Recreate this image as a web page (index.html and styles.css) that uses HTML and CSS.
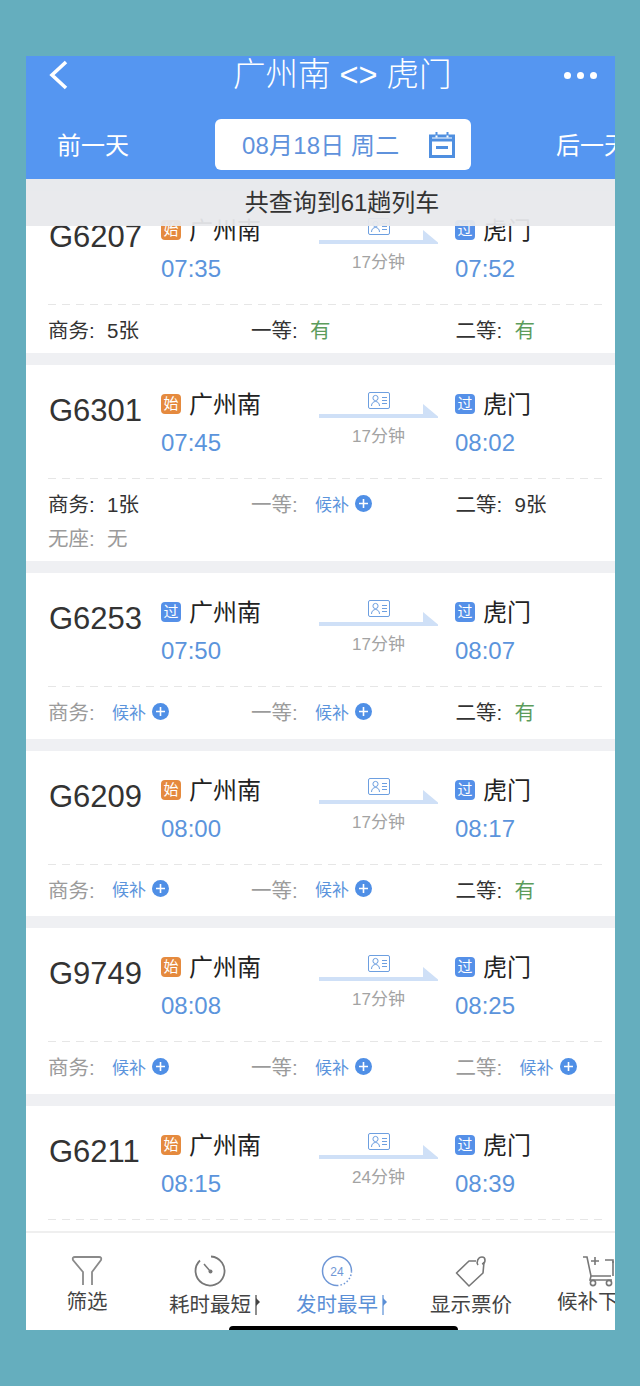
FILE: index.html
```html
<!DOCTYPE html>
<html lang="zh-CN">
<head>
    <meta charset="UTF-8">
    <meta name="viewport" content="width=device-width, initial-scale=1.0">
    <title>广州南 - 虎门</title>
    <link rel="stylesheet" href="styles.css">
</head>
<body>
    <svg class="defs" width="0" height="0">
        <symbol id="route-arrow" viewBox="0 0 120 27">
            <rect x="49.5" y="0.5" width="21" height="16" rx="1.5" fill="#fff" stroke="#6d9fe0"/>
            <circle cx="56.5" cy="6" r="2.6" fill="none" stroke="#6d9fe0"/>
            <path d="M52.5 14c0-6 8-6 8 0" fill="none" stroke="#6d9fe0"/>
            <path d="M63 5.5h5M63 8.5h5M63 11.5h5" stroke="#6d9fe0"/>
            <path d="M0 22h104V12l15 12.500V26H0z" fill="#cfe0f7"/>
        </symbol>
        <symbol id="plus" viewBox="0 0 17 17">
            <circle cx="8.5" cy="8.5" r="8.5" fill="#4f8fe6"/>
            <path d="M8.5 4v9M4 8.5h9" stroke="#fff" stroke-width="1.6"/>
        </symbol>
        <symbol id="sort-mark" viewBox="0 0 5 20">
            <path d="M1 0v20" stroke="currentColor" stroke-width="1.2"/>
            <path d="M1 3l4 4-4 4z" fill="currentColor"/>
        </symbol>
    </svg>

    <div class="screen">
        <header class="header">
            <div class="title-row">
                <svg class="back" width="20" height="30" viewBox="0 0 20 30"><path d="M18 2L4 15l14 13" fill="none" stroke="#fff" stroke-width="3.6"/></svg>
                <h1 class="title">广州南 &lt;&gt; 虎门</h1>
                <div class="dots"><span></span><span></span><span></span></div>
            </div>
            <div class="date-row">
                <span class="day-link">前一天</span>
                <div class="date-pill">
                    <span class="date-text">08月18日 周二</span>
                    <svg width="26" height="26" viewBox="0 0 26 26">
                        <path d="M1.500 4h23v20.500h-23z" fill="none" stroke="#4f8fe0" stroke-width="3"/>
                        <path d="M1 8h24" stroke="#4f8fe0" stroke-width="3"/>
                        <path d="M7.500 0v5M18.500 0v5" stroke="#4f8fe0" stroke-width="2"/>
                        <path d="M7.500 3.500v2M18.500 3.500v2" stroke="#fff" stroke-width="2"/>
                        <rect x="7" y="14" width="12" height="3" fill="#4f8fe0"/>
                    </svg>
                </div>
                <span class="day-link day-next">后一天</span>
            </div>
        </header>

        <div class="content">
            <div class="count-banner">共查询到61趟列车</div>
            <div class="list">
                <section class="card card-first">
                    <div class="route">
                        <div class="train-no">G6207</div>
                        <div class="stop">
                            <div class="stop-name"><i class="badge badge-start">始</i>广州南</div>
                            <div class="stop-time">07:35</div>
                        </div>
                        <div class="trip">
                            <svg width="120" height="27"><use href="#route-arrow"/></svg>
                            <div class="duration">17分钟</div>
                        </div>
                        <div class="stop stop-end">
                            <div class="stop-name"><i class="badge">过</i>虎门</div>
                            <div class="stop-time">07:52</div>
                        </div>
                    </div>
                    <div class="seats">
                        <div class="seat"><span class="seat-label">商务:</span><span>5张</span></div>
                        <div class="seat"><span class="seat-label">一等:</span><span class="yes">有</span></div>
                        <div class="seat"><span class="seat-label">二等:</span><span class="yes">有</span></div>
                    </div>
                </section>

                <section class="card card-tall">
                    <div class="route">
                        <div class="train-no">G6301</div>
                        <div class="stop">
                            <div class="stop-name"><i class="badge badge-start">始</i>广州南</div>
                            <div class="stop-time">07:45</div>
                        </div>
                        <div class="trip">
                            <svg width="120" height="27"><use href="#route-arrow"/></svg>
                            <div class="duration">17分钟</div>
                        </div>
                        <div class="stop stop-end">
                            <div class="stop-name"><i class="badge">过</i>虎门</div>
                            <div class="stop-time">08:02</div>
                        </div>
                    </div>
                    <div class="seats">
                        <div class="seat"><span class="seat-label">商务:</span><span>1张</span></div>
                        <div class="seat off"><span class="seat-label">一等:</span><span class="wait">候补<svg width="17" height="17"><use href="#plus"/></svg></span></div>
                        <div class="seat"><span class="seat-label">二等:</span><span>9张</span></div>
                        <div class="seat off"><span class="seat-label">无座:</span><span>无</span></div>
                    </div>
                </section>

                <section class="card">
                    <div class="route">
                        <div class="train-no">G6253</div>
                        <div class="stop">
                            <div class="stop-name"><i class="badge">过</i>广州南</div>
                            <div class="stop-time">07:50</div>
                        </div>
                        <div class="trip">
                            <svg width="120" height="27"><use href="#route-arrow"/></svg>
                            <div class="duration">17分钟</div>
                        </div>
                        <div class="stop stop-end">
                            <div class="stop-name"><i class="badge">过</i>虎门</div>
                            <div class="stop-time">08:07</div>
                        </div>
                    </div>
                    <div class="seats">
                        <div class="seat off"><span class="seat-label">商务:</span><span class="wait">候补<svg width="17" height="17"><use href="#plus"/></svg></span></div>
                        <div class="seat off"><span class="seat-label">一等:</span><span class="wait">候补<svg width="17" height="17"><use href="#plus"/></svg></span></div>
                        <div class="seat"><span class="seat-label">二等:</span><span class="yes">有</span></div>
                    </div>
                </section>

                <section class="card">
                    <div class="route">
                        <div class="train-no">G6209</div>
                        <div class="stop">
                            <div class="stop-name"><i class="badge badge-start">始</i>广州南</div>
                            <div class="stop-time">08:00</div>
                        </div>
                        <div class="trip">
                            <svg width="120" height="27"><use href="#route-arrow"/></svg>
                            <div class="duration">17分钟</div>
                        </div>
                        <div class="stop stop-end">
                            <div class="stop-name"><i class="badge">过</i>虎门</div>
                            <div class="stop-time">08:17</div>
                        </div>
                    </div>
                    <div class="seats">
                        <div class="seat off"><span class="seat-label">商务:</span><span class="wait">候补<svg width="17" height="17"><use href="#plus"/></svg></span></div>
                        <div class="seat off"><span class="seat-label">一等:</span><span class="wait">候补<svg width="17" height="17"><use href="#plus"/></svg></span></div>
                        <div class="seat"><span class="seat-label">二等:</span><span class="yes">有</span></div>
                    </div>
                </section>

                <section class="card">
                    <div class="route">
                        <div class="train-no">G9749</div>
                        <div class="stop">
                            <div class="stop-name"><i class="badge badge-start">始</i>广州南</div>
                            <div class="stop-time">08:08</div>
                        </div>
                        <div class="trip">
                            <svg width="120" height="27"><use href="#route-arrow"/></svg>
                            <div class="duration">17分钟</div>
                        </div>
                        <div class="stop stop-end">
                            <div class="stop-name"><i class="badge">过</i>虎门</div>
                            <div class="stop-time">08:25</div>
                        </div>
                    </div>
                    <div class="seats">
                        <div class="seat off"><span class="seat-label">商务:</span><span class="wait">候补<svg width="17" height="17"><use href="#plus"/></svg></span></div>
                        <div class="seat off"><span class="seat-label">一等:</span><span class="wait">候补<svg width="17" height="17"><use href="#plus"/></svg></span></div>
                        <div class="seat off"><span class="seat-label">二等:</span><span class="wait">候补<svg width="17" height="17"><use href="#plus"/></svg></span></div>
                    </div>
                </section>

                <section class="card">
                    <div class="route">
                        <div class="train-no">G6211</div>
                        <div class="stop">
                            <div class="stop-name"><i class="badge badge-start">始</i>广州南</div>
                            <div class="stop-time">08:15</div>
                        </div>
                        <div class="trip">
                            <svg width="120" height="27"><use href="#route-arrow"/></svg>
                            <div class="duration">24分钟</div>
                        </div>
                        <div class="stop stop-end">
                            <div class="stop-name"><i class="badge">过</i>虎门</div>
                            <div class="stop-time">08:39</div>
                        </div>
                    </div>
                </section>
            </div>
        </div>

        <nav class="tabbar">
            <div class="tab tab-raised">
                <svg width="32" height="32" viewBox="0 0 32 32"><path d="M12 30V17L2 5q-1-3 2-3h24q3 0 2 3L21 17v13" fill="none" stroke="#8a8a8a" stroke-width="1.8"/></svg>
                <span class="tab-label">筛选</span>
            </div>
            <div class="tab">
                <svg width="32" height="32" viewBox="0 0 32 32">
                    <path d="M17 1.500A14.500 14.500 0 1 1 6 5.500" fill="none" stroke="#777" stroke-width="1.800"/>
                    <path d="M10 9l6 7" stroke="#777" stroke-width="1.500"/>
                    <circle cx="16.500" cy="16.500" r="2" fill="#777"/>
                </svg>
                <span class="tab-label">耗时最短<svg class="sort-mark" width="5" height="20"><use href="#sort-mark"/></svg></span>
            </div>
            <div class="tab tab-active">
                <svg width="32" height="32" viewBox="0 0 32 32">
                    <path d="M30.500 16A14.500 14.500 0 1 0 16 30.500" fill="none" stroke="#6f97d6" stroke-width="1.500"/>
                    <path d="M16 30.500A14.500 14.500 0 0 0 30.500 16" fill="none" stroke="#6f97d6" stroke-width="1.500" stroke-dasharray="1.500 2"/>
                    <text class="clock-text" x="16" y="20.500" text-anchor="middle">24</text>
                </svg>
                <span class="tab-label">发时最早<svg class="sort-mark" width="5" height="20"><use href="#sort-mark"/></svg></span>
            </div>
            <div class="tab">
                <svg width="32" height="32" viewBox="0 0 32 32">
                    <path d="M21 6H14L1.500 18 14 31l14-13 1-11" fill="none" stroke="#777" stroke-width="1.600" stroke-linejoin="round"/>
                    <path d="M23 10c-2-3 0-8 4-8s4 6 0 7" fill="none" stroke="#777" stroke-width="1.600"/>
                </svg>
                <span class="tab-label">显示票价</span>
            </div>
            <div class="tab tab-raised">
                <svg width="32" height="32" viewBox="0 0 32 32">
                    <path d="M1 2h4l4 19h20M30 7h2M9 21l-1 4h22" fill="none" stroke="#777" stroke-width="1.600"/>
                    <path d="M13 2v8M9 6h8M23 5h8v16" fill="none" stroke="#777" stroke-width="1.600"/>
                    <circle cx="11" cy="28" r="2.600" fill="none" stroke="#777" stroke-width="1.600"/>
                    <circle cx="27" cy="28" r="2.600" fill="none" stroke="#777" stroke-width="1.600"/>
                </svg>
                <span class="tab-label">候补下单</span>
            </div>
        </nav>
        <div class="home-bar"></div>
    </div>
</body>
</html>
```

FILE: styles.css
```css
* {
    box-sizing: border-box;
}
html, body {
    margin: 0;
    height: 1386px;
    overflow: hidden;
}
body {
    background-color: #65aebe;
    padding: 56px 0 0 26px;
    font-family: "Liberation Sans", "Noto Sans CJK SC", sans-serif;
    color: #333;
}
.defs {
    position: absolute;
}
.screen {
    position: relative;
    width: 589px;
    height: 1274px;
    display: flex;
    flex-direction: column;
    overflow: hidden;
    background-color: #eff0f3;
}

/* header */
.header {
    height: 123px;
    flex-shrink: 0;
    background-color: #5596f1;
    color: white;
}
.title-row {
    height: 38px;
    display: flex;
    align-items: center;
    padding: 0 18px 0 22px;
}
.title {
    margin: 0 0 0 165px;
    font-size: 32.5px;
    font-weight: 300;
    line-height: 38px;
    white-space: nowrap;
}
.dots {
    margin-left: auto;
    display: flex;
    gap: 6px;
}
.dots span {
    width: 7px;
    height: 7px;
    border-radius: 50%;
    background-color: white;
}
.date-row {
    display: flex;
    align-items: center;
    margin-top: 25px;
    padding-left: 31px;
    white-space: nowrap;
}
.day-link {
    font-size: 24px;
    width: 72px;
    flex-shrink: 0;
    margin-top: -2px;
}
.day-next {
    margin-left: 85px;
}
.date-pill {
    width: 256px;
    height: 51px;
    flex-shrink: 0;
    margin-left: 86px;
    padding: 0 16px 0 27px;
    display: flex;
    align-items: center;
    justify-content: space-between;
    background-color: white;
    border-radius: 6px;
    font-size: 24px;
    color: #5f92dc;
}
.date-text {
    margin-top: -2px;
    letter-spacing: 0.15px;
}

/* list */
.content {
    position: relative;
    flex: 1;
    min-height: 0;
    overflow: hidden;
}
.count-banner {
    position: absolute;
    left: 0;
    top: 0;
    width: 100%;
    height: 47px;
    padding-left: 43px;
    line-height: 47px;
    text-align: center;
    font-size: 24px;
    color: #333;
    background-color: rgba(232, 233, 236, 0.94);
    z-index: 1;
}
.list {
    display: flex;
    flex-direction: column;
    gap: 12px;
}
.card {
    height: 165.67px;
    flex-shrink: 0;
    padding: 0 9px 0 22px;
    background-color: white;
}
.card-first {
    height: 162px;
    margin-top: 12px;
}
.card-tall {
    height: 196px;
}
.route {
    height: 114px;
    display: grid;
    grid-template-columns: 113px 158px 120px 1fr;
    background-image: repeating-linear-gradient(to right, #e6e6e6 0, #e6e6e6 8px, transparent 8px, transparent 14px);
    background-size: 100% 1px;
    background-position: bottom;
    background-repeat: no-repeat;
}
.train-no {
    padding: 29px 0 0 1px;
    font-size: 31px;
    line-height: 34px;
}
.stop {
    padding-top: 23px;
}
.stop-end {
    padding-left: 16px;
}
.stop-name {
    height: 36px;
    display: flex;
    align-items: center;
    font-size: 24px;
    line-height: 34px;
    padding-bottom: 2px;
    color: #222;
}
.badge {
    width: 20px;
    height: 20px;
    margin: -2px 8px 0 0;
    flex-shrink: 0;
    border-radius: 4px;
    background-color: #5590e8;
    color: white;
    font-size: 15px;
    font-style: normal;
    line-height: 20px;
    text-align: center;
}
.badge-start {
    background-color: #e58a3e;
}
.stop-time {
    height: 38px;
    line-height: 38px;
    font-size: 24px;
    color: #5b94dc;
}
.trip {
    padding-top: 27px;
}
.trip svg {
    display: block;
}
.duration {
    height: 35px;
    line-height: 35px;
    text-align: center;
    font-size: 17px;
    color: #a3a3a3;
    margin-left: -1px;
}
.seats {
    display: grid;
    grid-template-columns: 203px 204.500px 1fr;
    padding-top: 7px;
    font-size: 20.5px;
}
.seat {
    height: 34px;
    display: flex;
    align-items: center;
    white-space: nowrap;
}
.seat-label {
    width: 59px;
    flex-shrink: 0;
}
.off {
    color: #9b9b9b;
}
.yes {
    color: #5c9c5c;
}
.wait {
    margin-left: 5px;
    display: flex;
    align-items: center;
    gap: 6px;
    font-size: 17px;
    color: #5b94dc;
}

/* bottom bar */
.tabbar {
    height: 99px;
    flex-shrink: 0;
    display: grid;
    grid-template-columns: 122px 124px 130px 138px 116px;
    padding-top: 22px;
    border-top: 2px solid #efefef;
    background-color: white;
    color: #444;
}
.tab {
    display: flex;
    flex-direction: column;
    align-items: center;
    white-space: nowrap;
}
.tab-label {
    position: relative;
    margin-top: 4px;
    font-size: 20.5px;
    line-height: 28px;
}
.tab-raised .tab-label {
    margin-top: 1px;
}
.tab-active {
    color: #5b8fd6;
}
.clock-text {
    font-size: 12px;
    fill: #6f97d6;
}
.sort-mark {
    position: absolute;
    right: -9px;
    top: 4px;
}
.home-bar {
    position: absolute;
    left: 203px;
    bottom: 0;
    width: 229px;
    height: 4px;
    background-color: black;
    border-radius: 4px 4px 0 0;
}
```
